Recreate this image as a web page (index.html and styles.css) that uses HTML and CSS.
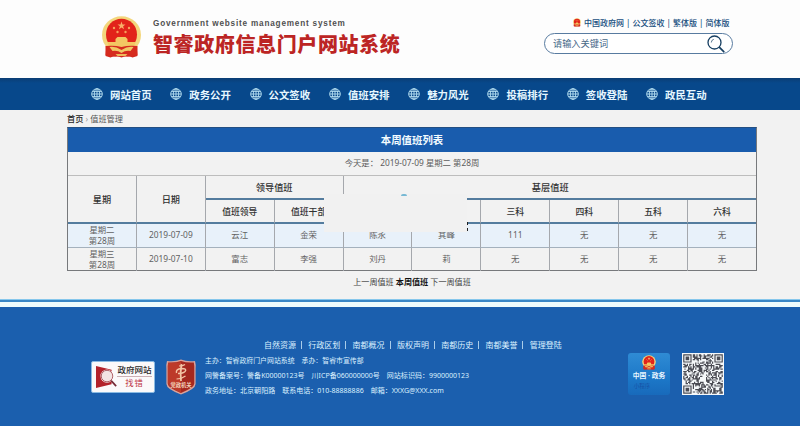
FILE: index.html
```html
<!DOCTYPE html>
<html lang="zh-CN">
<head>
<meta charset="utf-8">
<title>智睿政府信息门户网站系统</title>
<link rel="stylesheet" href="styles.css">
</head>
<body>
<svg class="defs" width="0" height="0">
  <symbol id="emblem" viewBox="0 0 40 42">
    <path d="M5 29h30l1 11-5 1.500-5-2-6 2-6-2-5 2-5-1.500z" fill="#d2281e"/>
    <ellipse cx="20" cy="19" rx="19.5" ry="18.8" fill="#f3d67c"/>
    <ellipse cx="20" cy="18.5" rx="15.5" ry="15.8" fill="#e2231a"/>
    <path d="M20 5.500l1 2.900h3l-2.400 1.900.9 2.900-2.500-1.700-2.500 1.700.9-2.900L16 8.400h3z" fill="#f8b06a"/>
    <g fill="#f6a05c"><circle cx="12.5" cy="12" r="1.2"/><circle cx="16" cy="16" r="1.2"/><circle cx="24" cy="16" r="1.2"/><circle cx="27.500" cy="12" r="1.2"/></g>
    <path d="M14 23l2-2h8l2 2v3h8l-2 6q-12 3-24 0l-2-6h8z" fill="#f3c763"/>
    <path d="M4 30q9-1 16 1 7-2 16-1v9q-8 3-16 1-8 2-16-1z" fill="#d62b1e"/>
    <path d="M8 31q6-1 12 3 6-4 12-3l-3 4q-5-1-9 2-4-3-9-2z" fill="#f0c765"/>
    <path d="M14 38h12l-2 2h-8z" fill="#efb95a"/>
  </symbol>
  <symbol id="globe" viewBox="0 0 12 12">
    <g fill="none" stroke="#b9e2f3" stroke-width=".9"><circle cx="6" cy="6" r="5.3"/><ellipse cx="6" cy="6" rx="2.7" ry="5.300"/><path d="M6 .7v10.600M.7 6h10.600M1.500 3.400h9M1.500 8.600h9"/></g>
  </symbol>
</svg>

<header class="header">
  <svg class="crest"><use href="#emblem"/></svg>
  <div class="brand">
    <p class="brand-en">Government website management system</p>
    <h1>智睿政府信息门户网站系统</h1>
  </div>
  <div class="tools">
    <div class="toplinks"><svg class="crest-mini"><use href="#emblem"/></svg><a>中国政府网</a><i>|</i><a>公文签收</a><i>|</i><a>繁体版</a><i>|</i><a>简体版</a></div>
    <div class="search"><span>请输入关键词</span>
      <svg viewBox="0 0 18 18"><g fill="none" stroke="#173f62"><circle cx="7.500" cy="7.500" r="6.500" stroke-width="1.300"/><path d="M4.300 7.500a3.300 3.300 0 0 1 2.500-3.200" stroke-width=".7"/><path d="M12.200 12.200l5 5" stroke-width="1.700"/></g></svg>
    </div>
  </div>
</header>

<nav class="nav">
  <a><svg><use href="#globe"/></svg>网站首页</a>
  <a><svg><use href="#globe"/></svg>政务公开</a>
  <a><svg><use href="#globe"/></svg>公文签收</a>
  <a><svg><use href="#globe"/></svg>值班安排</a>
  <a><svg><use href="#globe"/></svg>魅力风光</a>
  <a><svg><use href="#globe"/></svg>投稿排行</a>
  <a><svg><use href="#globe"/></svg>签收登陆</a>
  <a><svg><use href="#globe"/></svg>政民互动</a>
</nav>

<main class="main">
  <div class="crumbs"><b>首页</b> <span>›</span> 值班管理</div>
  <div class="roster">
    <div class="roster-title">本周值班列表</div>
    <div class="roster-date">今天是： 2019-07-09 星期二 第28周</div>
    <div class="grid">
      <div class="th tall">星期</div><div class="th tall">日期</div>
      <div class="th span2">领导值班</div><div class="th span6">基层值班</div>
      <div class="th sub">值班领导</div><div class="th sub">值班干部</div><div class="th sub">一科</div><div class="th sub">二科</div><div class="th sub">三科</div><div class="th sub">四科</div><div class="th sub">五科</div><div class="th sub">六科</div>
      <div class="td hot">星期二<br>第28周</div><div class="td hot">2019-07-09</div><div class="td hot">云江</div><div class="td hot">金荣</div><div class="td hot">陈永</div><div class="td hot">其峰</div><div class="td hot">111</div><div class="td hot">无</div><div class="td hot">无</div><div class="td hot">无</div>
      <div class="td">星期三<br>第28周</div><div class="td">2019-07-10</div><div class="td">富志</div><div class="td">李强</div><div class="td">刘丹</div><div class="td">莉</div><div class="td">无</div><div class="td">无</div><div class="td">无</div><div class="td">无</div>
    </div>
    <div class="cover"></div>
  </div>
  <div class="pager">上一周值班 <b>本周值班</b> 下一周值班</div>
</main>

<footer class="footer">
  <div class="footlinks"><a>自然资源</a><a>行政区划</a><a>南都概况</a><a>版权声明</a><a>南都历史</a><a>南都美誉</a><a>管理登陆</a></div>
  <div class="footrow">
    <div class="report">
      <svg viewBox="0 0 24 26"><path d="M0 1l17 4v16L0 25z" fill="#b3222b"/><circle cx="12" cy="12" r="6.500" fill="#f3e4e4" stroke="#fff" stroke-width="1.300"/><circle cx="12" cy="12" r="6.300" fill="none" stroke="#8e2630" stroke-width=".8"/><path d="M16.500 17l5.500 6" stroke="#742936" stroke-width="1.800"/></svg>
      <div><b>政府网站</b><em>找错</em></div>
    </div>
    <div class="shield">
      <svg viewBox="0 0 30 36"><path d="M15 .5q6 2.500 14 1.500 1 3 .6 8v15q0 5-14.600 10.500Q.4 30 .4 25V10Q0 5 1 2q8 1 14-1.500z" fill="#d9a29a"/><path d="M15 2q6 2 12.800 1.400.7 3 .5 7v14q0 4-13.300 9.500Q1.700 28.400 1.700 24.400v-14q-.2-4 .5-7Q9 4 15 2z" fill="#a5281f"/><path d="M15 3v31Q2 28 2 24V4q8 0 13-1z" fill="#bd3a29"/><g fill="none" stroke="#f3c5a5"><path d="M15.500 5q-1.500 9-.5 17" stroke-width="1.800"/><path d="M10.500 14q-1-4 5-4.500 6 0 3.500 3-2 2-7 2" stroke-width="1.400"/><path d="M13 7q4 0 6-1.500M10.500 20q5 0 9-3" stroke-width="1.200"/></g></svg>
      <span>党政机关</span>
    </div>
    <div class="info">
      <p>主办：智睿政府门户网站系统<s></s>承办：智睿市宣传部</p>
      <p class="wide">网警备案号：警备K00000123号<s></s>川ICP备060000000号<s></s>网站标识码：9900000123</p>
      <p class="wide">政务地址：北京朝阳路<s></s>联系电话：010-88888886<s></s>邮箱：XXXG@XXX.com</p>
    </div>
    <div class="gov"><svg><use href="#emblem"/></svg><b>中国 · 政务</b><small>小程序</small></div>
    <svg class="qr" viewBox="-1 -1 35 35"></svg>
  </div>
</footer>
<script src="qr.js"></script>
</body>
</html>
```
FILE: styles.css
```css
* { box-sizing: border-box; margin: 0; padding: 0; }
body { width: 800px; height: 426px; overflow: hidden; background: #f2f2f2; color: #333; font-family: "Noto Sans", "Noto Sans CJK SC", sans-serif; font-size: 8.6px; }
svg { display: block; flex: none; }
.defs { position: absolute; }
i, em { font-style: normal; }

.header { height: 78px; display: flex; align-items: flex-start; background: #fdfdfd; padding-left: 101px; }
.crest { width: 41px; height: 42px; margin-top: 16px; }
.brand { width: 260px; margin: 18px 0 0 11px; white-space: nowrap; }
.brand-en { font: bold 8.200px/12px "Liberation Sans", sans-serif; letter-spacing: .8px; color: #505050; }
.brand h1 { font-size: 20px; line-height: 30px; letter-spacing: .62px; font-weight: 900; color: #bc2524; }
.tools { margin: 16px 0 0 131px; width: 190px; }
.toplinks { display: flex; align-items: center; height: 12px; margin-left: 29px; font-size: 8px; font-weight: 500; color: #174e7d; white-space: nowrap; }
.crest-mini { width: 8px; height: 9px; margin-right: 3px; }
.toplinks i { width: 8.500px; text-align: center; }
.search { display: flex; align-items: center; justify-content: space-between; width: 189px; height: 21px; margin-top: 5px; padding: 0 7px 2px 8px; border: 1px solid #587ba0; border-radius: 11px; background: #fff; color: #466887; font-size: 9.200px; }
.search svg { width: 18px; height: 18px; margin-top: 2px; }

.nav { height: 32px; display: flex; padding-left: 91px; background: linear-gradient(#0b3d74, #07488b 5px, #07488b); color: #e6f7ff; font-size: 10.400px; font-weight: 700; }
.nav a { flex: none; width: 79.300px; display: flex; align-items: center; white-space: nowrap; }
.nav svg { width: 12px; height: 12px; margin-right: 7px; }

.main { height: 189px; padding: 0 43px 0 67px; }
.crumbs { height: 17px; line-height: 17px; font-size: 8.200px; color: #555; }
.crumbs b { font-weight: 500; color: #222; }
.crumbs span { color: #999; }
.roster { position: relative; width: 690px; height: 144px; border: 1px solid #77797c; border-top-color: #234f83; }
.roster-title { height: 24px; line-height: 25px; background: #195cad; color: #f3fbff; text-align: center; font-size: 10.400px; font-weight: 700; }
.roster-date { height: 24px; line-height: 22px; border-bottom: 1px solid #bdbdbd; text-align: center; color: #5d5d5d; font-size: 8.350px; }
.grid { display: grid; grid-template-columns: repeat(10, 68.900px); grid-template-rows: 24px 24px 24px 23px; width: 688px; overflow: hidden; }
.th, .td { display: flex; align-items: center; justify-content: center; text-align: center; border-right: 1px solid #a5a8ad; overflow: hidden; white-space: nowrap; }
.th { color: #333; font-weight: 500; font-size: 9.200px; border-bottom: 2px solid #547c9e; }
.sub { font-size: 8.800px; }
.tall { grid-row: span 2; }
.span2 { grid-column: span 2; }
.span6 { grid-column: span 6; border-right: 0; }
.td { color: #626262; font-size: 8.400px; line-height: 10.500px; }
.hot { background: #e8f1fa; border-bottom: 1px solid #a4b1bd; }
.cover { position: absolute; left: 256px; top: 66px; width: 143px; height: 38px; background: #f1f1f1; }
.cover::before { content: ""; position: absolute; left: 77px; top: 0; width: 6px; height: 2px; border-radius: 3px 3px 0 0; background: #78b9d4; }
.cover::after { content: ""; position: absolute; right: -1px; bottom: 1px; height: 9px; border-right: 1px dashed #222; }
.pager { height: 23px; line-height: 22px; text-align: center; font-size: 8.100px; color: #444; }
.pager b { color: #111; }

.footer { height: 127px; background: linear-gradient(#86c7ec 0 1px, #3a87c6 1px 3px, #effcfd 3px 8px, #1b5fae 8px); color: #dcf1ff; padding-top: 39px; }
.footlinks { display: flex; padding-left: 264px; height: 14px; align-items: flex-start; padding-top: 3px; font-size: 8px; }
.footlinks a { width: 44.300px; height: 8px; line-height: 8px; white-space: nowrap; position: relative; }
.footlinks a:not(:last-child)::after { content: ""; position: absolute; left: 37px; top: 0; width: 1px; height: 8px; background: #a9cce9; }
.footrow { display: flex; align-items: flex-start; padding-left: 91px; }
.report { display: flex; flex: none; width: 64px; height: 32px; margin-top: 9px; padding: 2px 2px 2px 4px; border: 1px solid #8bbbe3; border-radius: 2px; background: #fbf9fa; }
.report svg { width: 22px; height: 26px; }
.report div { flex: none; width: 35px; text-align: center; line-height: 12px; white-space: nowrap; margin-left: -1px; }
.report b { display: block; height: 13px; border-bottom: 1px solid #ccb0b4; color: #292929; font-size: 8.500px; font-weight: 500; }
.report em { display: block; color: #bd3445; font-size: 8.300px; letter-spacing: 1px; }
.shield { position: relative; flex: none; width: 30px; height: 36px; margin: 7px 0 0 11px; }
.shield svg { width: 30px; height: 36px; }
.shield span { position: absolute; left: 0; top: 22px; width: 30px; text-align: center; color: #f3d5bd; font-size: 5.200px; line-height: 8px; font-weight: 700; }
.info { flex: none; width: 410px; margin: 2px 0 0 9px; font-size: 6.900px; line-height: 14.400px; white-space: nowrap; }
.info .wide { font-size: 7.020px; }
.info s { display: inline-block; width: 7px; }
.gov { flex: none; width: 42px; height: 42px; margin: 1px 0 0 13px; border-radius: 3px; background: linear-gradient(#2f8bd4, #1c78c8 60%, #186abb); text-align: center; white-space: nowrap; }
.gov svg { width: 14px; height: 15px; margin: 2px auto 0; }
.gov b { display: block; color: #eaf7ff; font-size: 6.800px; line-height: 12px; }
.gov small { display: block; color: #1650a5; font-size: 5.500px; line-height: 9px; margin-right: 14px; }
.qr { width: 42px; height: 42px; margin: 1px 0 0 12px; background: #f5f8fa; }
```
FILE: qr.js
```js
// Fills the footer code with a 33x33 module pattern and three finder squares.
const N = 33;
let seed = 20190709, d = "";
const next = () => (seed = (seed * 1103515245 + 12345) % 2147483648) / 2147483648;
const near = (x, y) => (x < 8 && y < 8) || (x > N - 9 && y < 8) || (x < 8 && y > N - 9);
for (let y = 0; y < N; y++)
  for (let x = 0; x < N; x++)
    if (!near(x, y) && next() < 0.5) d += `M${x} ${y}h1v1h-1z`;
for (const [x, y] of [[0, 0], [N - 7, 0], [0, N - 7]])
  d += `M${x} ${y}h7v7h-7zM${x + 1} ${y + 1}v5h5v-5zM${x + 2} ${y + 2}h3v3h-3z`;
const path = document.createElementNS("http://www.w3.org/2000/svg", "path");
path.setAttribute("d", d);
path.setAttribute("fill", "#4b4c54");
document.querySelector(".qr").append(path);
```
